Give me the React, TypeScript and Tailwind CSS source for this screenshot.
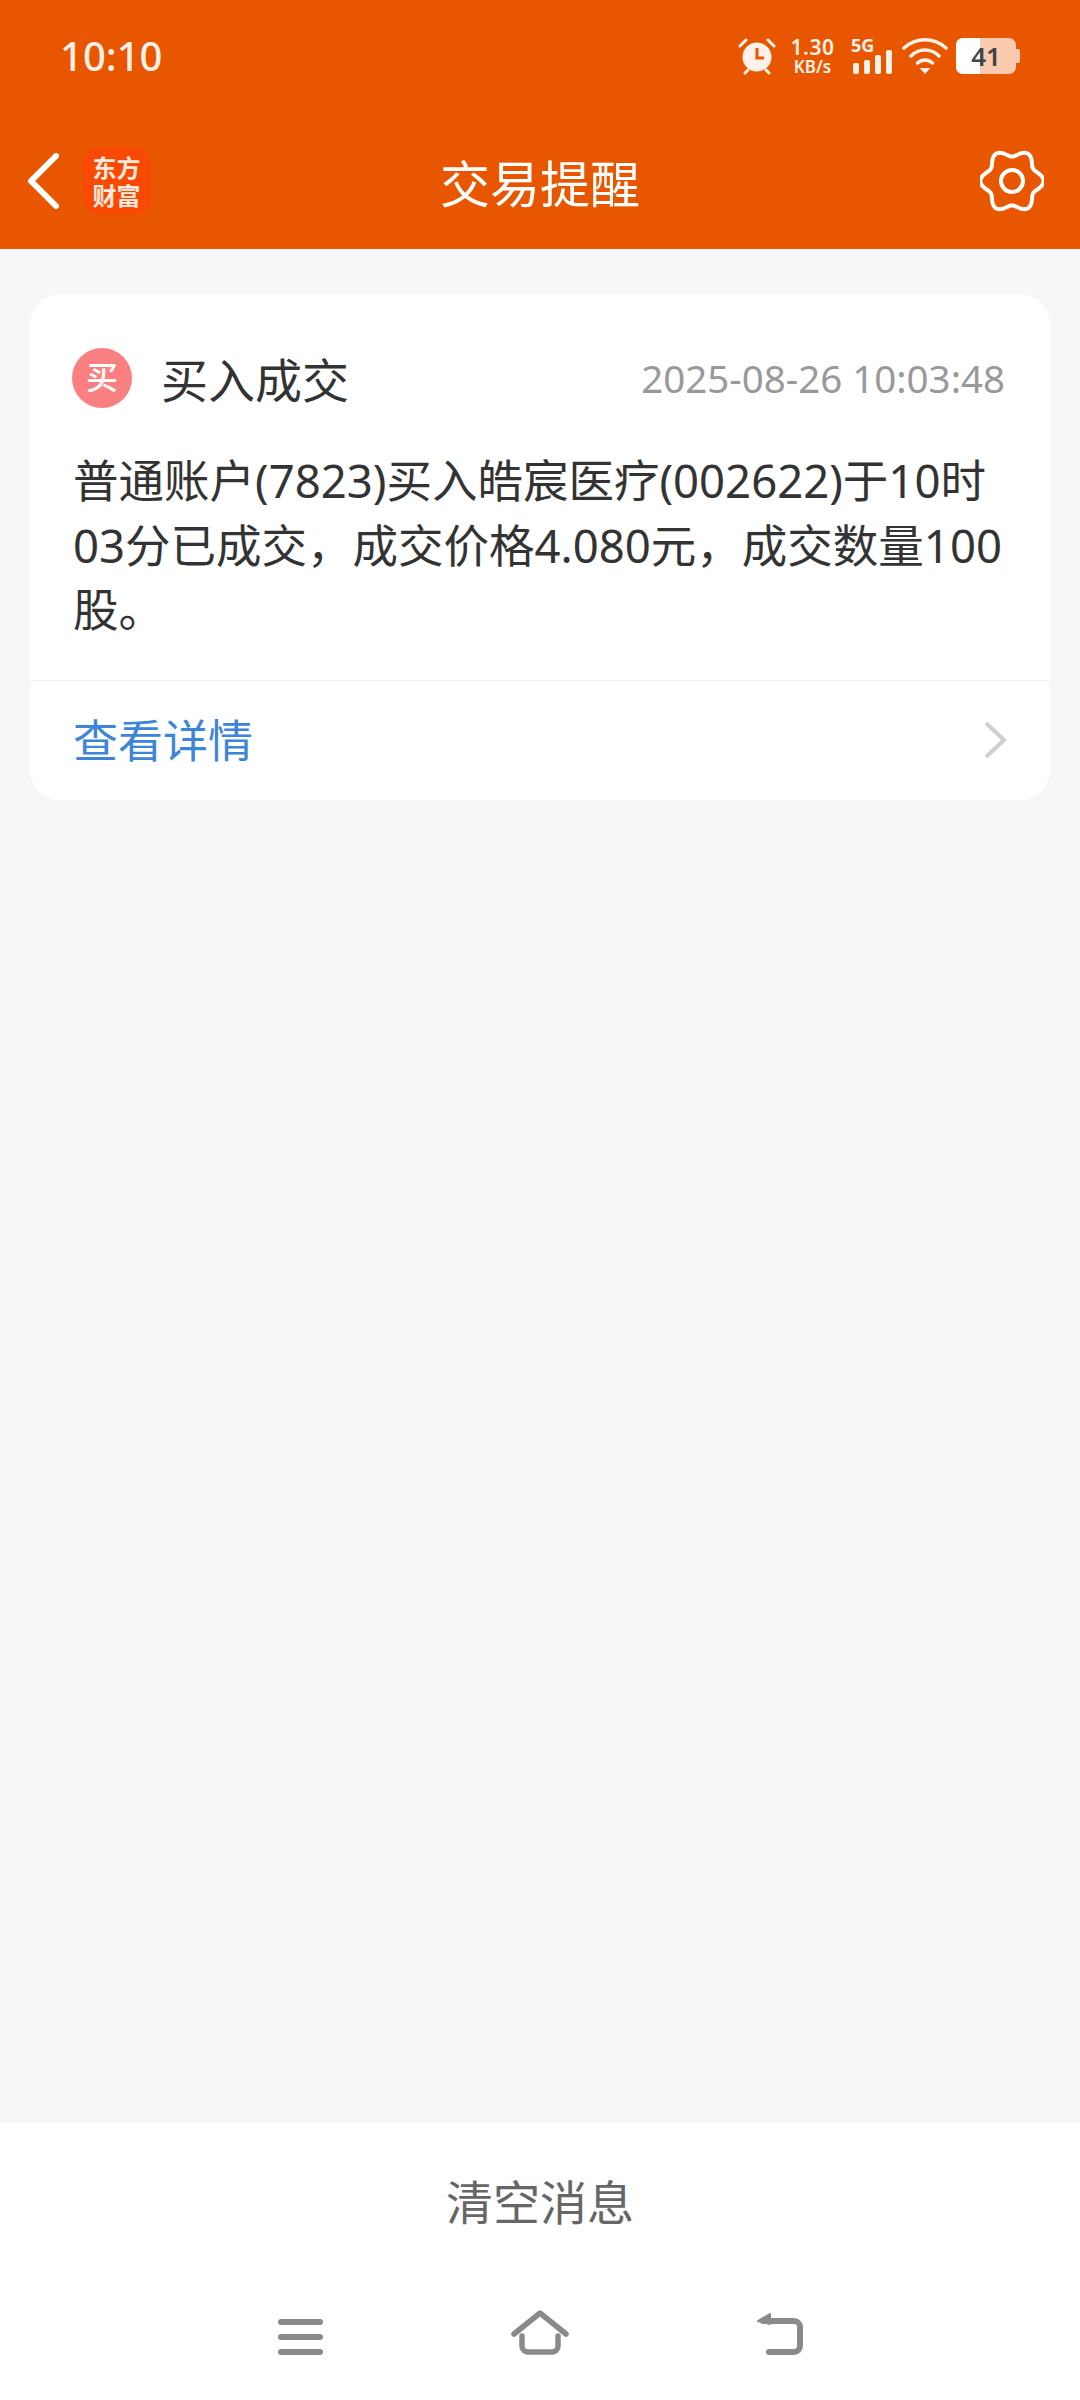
const FONT = "font-['Noto_Sans','Noto_Sans_CJK_SC',sans-serif]";

// six soft lobes, same outline as the app's settings icon
const gearPath = Array.from({ length: 121 }, (_, i) => {
  const a = (i / 120) * Math.PI * 2;
  const r = 28 + 3.6 * Math.cos(6 * a);
  return `${i === 0 ? "M" : "L"}${(32 + r * Math.cos(a)).toFixed(2)} ${(32 + r * Math.sin(a)).toFixed(2)}`;
}).join("") + "z";

const StatusIcons = () => (
  <div className="flex items-center">
    {/* alarm */}
    <svg width="38" height="38" viewBox="0 0 38 38" className="text-[#fff1e8]">
      <circle cx="19" cy="20" r="14.500" fill="currentColor" />
      <path d="M19 11v10h7" fill="none" stroke="#e85600" strokeWidth="3" />
      <path d="M2 9l6-6M36 9l-6-6M7 36l3-3M31 36l-3-3" stroke="currentColor" strokeWidth="3" strokeLinecap="round" />
    </svg>
    <div className="ml-[14px] flex w-[45px] flex-col items-center text-[#fff1e8] font-semibold">
      <span className="text-[21px] leading-[22px] tracking-[0.5px]">1.30</span>
      <span className="text-[17px] leading-[18px]">KB/s</span>
    </div>
    {/* 5G + signal */}
    <div className="relative ml-[16px] h-[38px] w-[43px]">
      <span className="absolute left-0 top-[-2px] text-[18px] font-bold leading-[20px] text-[#fff1e8]">5G</span>
      <svg width="43" height="38" viewBox="0 0 43 38" className="absolute left-0 top-0 text-[#fff1e8]">
        <rect x="2" y="26" width="6" height="11" rx="2" fill="currentColor" />
        <rect x="13" y="23" width="6" height="14" rx="2" fill="currentColor" />
        <rect x="24" y="18" width="6" height="19" rx="2" fill="currentColor" />
        <rect x="35" y="13" width="6" height="24" rx="2" fill="currentColor" />
      </svg>
    </div>
    {/* wifi */}
    <svg width="46" height="38" viewBox="0 0 46 38" className="ml-[8px] text-[#fff1e8]">
      <path d="M2 11C14 0 32 0 44 11M9 19C17 11 29 11 37 19M15.500 26C20 22 26 22 30.500 26" fill="none" stroke="currentColor" strokeWidth="3.500" strokeLinecap="round" />
      <path d="M17.500 31h11l-5.500 6z" fill="currentColor" />
    </svg>
    {/* battery */}
    <div className="relative ml-[8px] flex h-[36px] w-[60px] items-center justify-center overflow-hidden rounded-[7px] bg-[#fbcbb0]">
      <div className="absolute left-0 top-0 h-full w-[24px] bg-white" />
      <span className="relative text-[26px] font-semibold leading-none text-[#444444]">41</span>
    </div>
    <div className="h-[14px] w-[4px] rounded-r-[2px] bg-[#fbcbb0]" />
  </div>
);

const Header = () => (
  <header className="bg-[#e85600]">
    <div className="flex h-[112px] items-center justify-between pl-[60px] pr-[60px]">
      <span className="text-[40px] font-medium leading-none text-[#fff1e8]">10:10</span>
      <StatusIcons />
    </div>
    <div className="relative flex h-[137px] items-center justify-between pl-[27px] pr-[36px]">
      <div className="flex items-center">
        <svg width="32" height="56" viewBox="0 0 32 56">
          <path d="M29 3L4 28l25 25" fill="none" stroke="#fff" strokeWidth="6" strokeLinecap="round" strokeLinejoin="round" />
        </svg>
        <div className="ml-[24px] flex h-[67px] w-[67px] flex-col items-center justify-center rounded-[14px] bg-[#f94a05] font-['Noto_Sans_CJK_SC',sans-serif] text-[24px] font-bold leading-[28px] text-[#ffe9dc]">
          <span>东方</span>
          <span>财富</span>
        </div>
      </div>
      <h1 className="absolute left-0 right-0 mt-[6px] text-center text-[50px] font-normal leading-none text-white">交易提醒</h1>
      <svg width="64" height="64" viewBox="0 0 64 64" fill="none" stroke="#fff" strokeWidth="4" strokeLinejoin="round">
        <path d={gearPath} />
        <circle cx="32" cy="32" r="11" />
      </svg>
    </div>
  </header>
);

const TradeCard = () => (
  <section className="mx-[30px] mt-[45px] rounded-[30px] bg-white">
    <div className="flex h-[114px] items-end justify-between pb-0 pl-[42px] pr-[45px]">
      <div className="flex items-center">
        <span className="flex h-[60px] w-[60px] items-center justify-center rounded-full bg-[#f97f81] pb-[2px] text-[32px] font-medium leading-none text-white">买</span>
        <span className="ml-[29px] translate-y-[2px] text-[47px] leading-[58px] text-[#333333]">买入成交</span>
      </div>
      <span className="text-[38.500px] leading-[60px] text-[#999999]">2025-08-26 10:03:48</span>
    </div>
    <p className="mt-[40px] pl-[43px] pr-[36px] text-[45.500px] leading-[64.500px] text-[#333333]">
      普通账户(7823)买入皓宸医疗(002622)于10时03分已成交，成交价格4.080元，成交数量100股。
    </p>
    <div className="mt-[38px] flex h-[120px] items-center justify-between border-t border-[#eeeeee] pl-[43px] pr-[43px]">
      <span className="text-[45px] leading-none text-[#3d85d8]">查看详情</span>
      <svg width="24" height="38" viewBox="0 0 24 38">
        <path d="M3 2l18 17L3 36" fill="none" stroke="#d0d0d0" strokeWidth="4" />
      </svg>
    </div>
  </section>
);

const NavBar = () => (
  <div className="flex h-[119px] items-end pb-[45px] pl-[278px]">
    <svg width="45" height="36" viewBox="0 0 45 36" className="text-[#8a8a8a]">
      <path d="M3 3h39M3 18h39M3 33h39" stroke="currentColor" strokeWidth="6" strokeLinecap="round" />
    </svg>
    <svg width="58" height="45" viewBox="0 0 58 45" className="ml-[188px] text-[#8a8a8a]">
      <path d="M3 24L29 3l26 21M11 26v10a6 6 0 0 0 6 6h24a6 6 0 0 0 6-6V26" fill="none" stroke="currentColor" strokeWidth="5.500" strokeLinecap="round" strokeLinejoin="round" />
    </svg>
    <svg width="48" height="42" viewBox="0 0 48 42" className="ml-[186px] text-[#8a8a8a]">
      <path d="M8 8h31a6 6 0 0 1 6 6v19a6 6 0 0 1-6 6H14" fill="none" stroke="currentColor" strokeWidth="6" strokeLinecap="round" />
      <path d="M15 1L3 8l12 3z" fill="currentColor" stroke="currentColor" strokeWidth="2" strokeLinejoin="round" />
    </svg>
  </div>
);

export default function App() {
  return (
    <div className={`${FONT} flex h-[2400px] w-[1080px] flex-col bg-[#f6f7f9]`}>
      <Header />
      <main className="flex-1">
        <TradeCard />
      </main>
      <footer className="bg-white">
        <button className="flex h-[158px] w-full items-center justify-center text-[47px] leading-none text-[#666666]">清空消息</button>
        <NavBar />
      </footer>
    </div>
  );
}
